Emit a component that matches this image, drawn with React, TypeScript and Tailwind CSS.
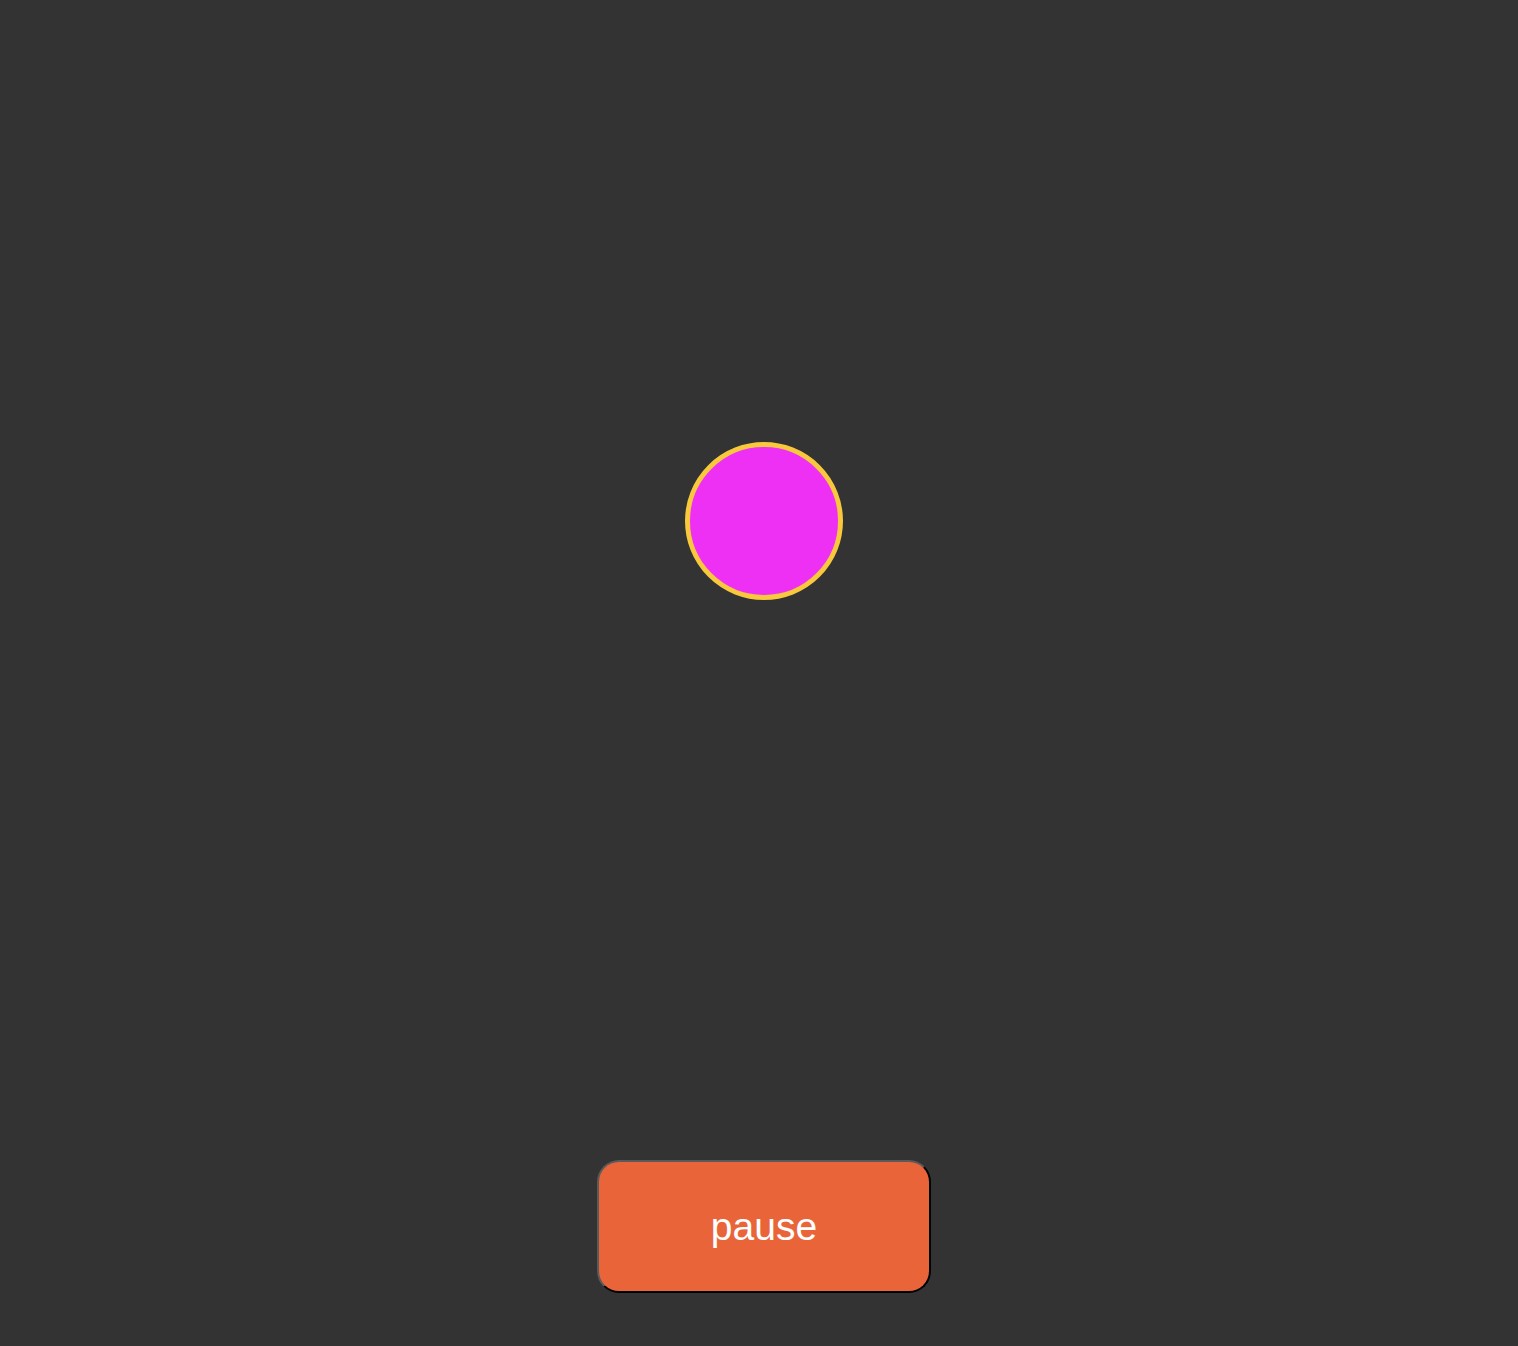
export default function App() {
  return (
    <div className="min-h-[1346px] w-full bg-[#333333] flex flex-col items-center pt-[442px] font-['Liberation_Sans',Arial,sans-serif]">
      {/* ball */}
      <div className="w-[158px] h-[158px] ml-[9px] rounded-full bg-[#ee30f5] border-[5px] border-[#f9c93d]" />

      {/* control */}
      <button className="mt-[560px] ml-[10px] w-[334px] h-[133px] rounded-[22px] bg-[#ea643a] text-white text-[39px] leading-none border-2 border-t-[#5a5a5a] border-l-[#5a5a5a] border-b-black border-r-black">
        pause
      </button>
    </div>
  );
}
